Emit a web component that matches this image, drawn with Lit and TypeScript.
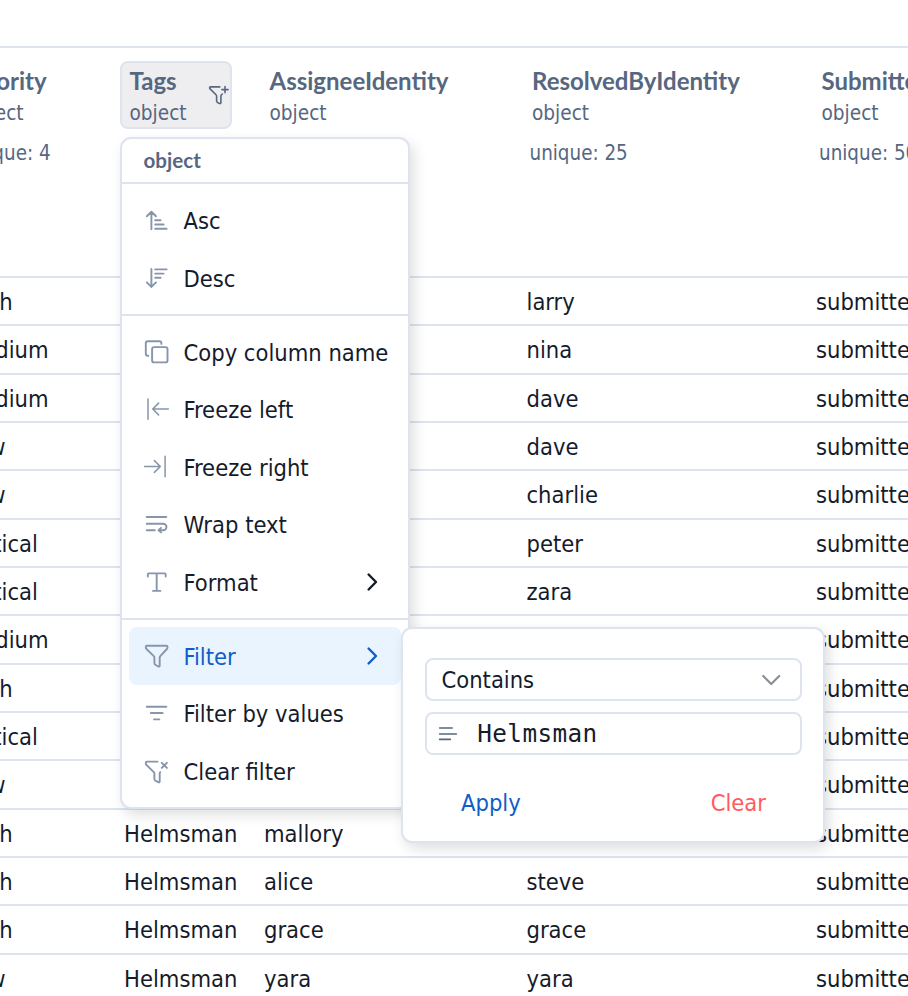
import { LitElement, html, svg, css } from "lit";
import { customElement } from "lit/decorators.js";
import { classMap } from "lit/directives/class-map.js";

const columns = [
  { name: "Priority", unique: "4" },
  { name: "Tags", unique: "" },
  { name: "AssigneeIdentity", unique: "" },
  { name: "ResolvedByIdentity", unique: "25" },
  { name: "SubmittedBy", unique: "50" },
];

const rows = [
  ["High", "", "", "larry"],
  ["Medium", "", "", "nina"],
  ["Medium", "", "", "dave"],
  ["Low", "", "", "dave"],
  ["Low", "", "", "charlie"],
  ["Critical", "", "", "peter"],
  ["Critical", "", "", "zara"],
  ["Medium", "", "", ""],
  ["High", "", "", ""],
  ["Critical", "", "", ""],
  ["Low", "", "", ""],
  ["High", "Helmsman", "mallory", ""],
  ["High", "Helmsman", "alice", "steve"],
  ["High", "Helmsman", "grace", "grace"],
  ["Low", "Helmsman", "yara", "yara"],
];

const icons: Record<string, unknown> = {
  asc: svg`<path d="M9.4 24.2V6.8M4.8 11.2L9.4 6.7L14 11.2M13.2 15.3H18.6M13.2 19.5H21.6M13.2 23.8H24.6"/>`,
  desc: svg`<path d="M9.4 6V24M4.8 19.4L9.4 23.9L14 19.4M13.2 6.4H24.6M13.2 10.6H21.6M13.2 14.8H18.6"/>`,
  copy: svg`<path d="M6.3 18.8H5.8A2 2 0 0 1 3.8 16.8V6.2A2 2 0 0 1 5.8 4.2H17.4A2 2 0 0 1 19.4 6.2V6.9"/><rect x="10.1" y="10.1" width="15.4" height="15.3" rx="2"/>`,
  left: svg`<path class="thin" d="M6 4.9V25.2M26.3 15H10.8M16.6 9.1L10.7 15L16.6 20.9"/>`,
  right: svg`<path class="thin" d="M23.1 4.3V24.7M2.6 14.5H18.2M12.4 8.6L18.3 14.5L12.4 20.4"/>`,
  wrap: svg`<path d="M4.7 8H24.3M4.7 14.7H21.2A3.25 3.25 0 0 1 21.2 21.2H16.6M19 18.9L16.5 21.2L19 23.4M4.7 21.2H12.8"/>`,
  format: svg`<path d="M5.8 9.5V7.4Q5.8 6.4 6.8 6.4H22.7Q23.7 6.4 23.7 7.4V9.5M14.7 6.4V23.9M11 23.9H18.4"/>`,
  filter: svg`<path d="M4.8 4.7H24.5Q25.5 4.7 25.5 5.7V6.6Q25.5 7.4 24.9 8L18.3 15.1Q17.7 15.8 17.7 16.6V24.6Q17.7 25.9 16.4 25.5L13.3 23.7Q12.4 23.1 12.4 22V16.6Q12.4 15.8 11.8 15.1L4.5 8Q3.8 7.4 3.8 6.6V5.7Q3.8 4.7 4.8 4.7Z"/>`,
  values: svg`<path d="M4.8 8.7H24.3M8.8 15H20.6M12 21.4H17.3"/>`,
  clear: svg`<path d="M15.6 5.6H4.8Q3.8 5.6 3.8 6.6V7.4Q3.8 8.2 4.4 8.8L11.8 16.2Q12.4 16.8 12.4 17.6V23Q12.4 24 13.2 24.5L16.2 26.2Q17.7 26.8 17.7 25.4V17.6Q17.7 16.8 18.3 16.2M19.8 6.8L24.9 11.9M24.9 6.8L19.8 11.9"/>`,
};

const sections = [
  [["asc", "Asc"], ["desc", "Desc"]],
  [["copy", "Copy column name"], ["left", "Freeze left"], ["right", "Freeze right"], ["wrap", "Wrap text"], ["format", "Format"]],
  [["filter", "Filter"], ["values", "Filter by values"], ["clear", "Clear filter"]],
];

@customElement("data-grid")
class DataGrid extends LitElement {
  static styles = css`
    :host { display: block; overflow: hidden; }
    .line {
      display: grid;
      grid-template-columns: 163px 140px 262.5px 289.5px 220px;
      margin-left: -49px;
      box-sizing: border-box;
      border-top: 2px solid #dde3ef;
      white-space: nowrap;
    }
    .head { height: 230px; padding-top: 13px; align-items: start; color: #56677f; }
    .cell { padding-left: 6px; }
    .chip {
      display: flex;
      align-items: center;
      justify-content: space-between;
      box-sizing: border-box;
      height: 68px;
      border: 2px solid transparent;
      border-radius: 8px;
      padding: 0 0 0 7.5px;
    }
    .chip.on { width: 112px; background: #eeeef1; border-color: #dde3ef; }
    .label { padding-top: 3px; }
    .name { font: 700 24px/33px Lato, sans-serif; }
    .type { font-size: 20.6px; line-height: 32px; }
    .unique { font-size: 20.4px; line-height: 30px; margin: 8.5px 0 0 7px; }
    .funnel { width: 24px; height: 24px; flex: none; }
    .row { height: 48.34px; line-height: 47px; font-size: 23.5px; color: #151b2b; }
    .row .cell { padding-left: 10px; padding-top: 1px; }
    .row .cell:first-child { padding-left: 13px; }
  `;

  render() {
    return html`
      <div class="line head">
        ${columns.map(
          (c) => html`<div class="cell">
            <div class=${classMap({ chip: true, on: c.name === "Tags" })}>
              <div class="label">
                <div class="name">${c.name}</div>
                <div class="type">object</div>
              </div>
              ${c.name === "Tags"
                ? html`<svg class="funnel" viewBox="0 0 24 24" fill="none" stroke="#56677f" stroke-width="1.6" stroke-linecap="round" stroke-linejoin="round">
                    <path d="M13.8 3.9H4.4Q3.6 3.9 3.6 4.7Q3.6 5.4 4.1 5.9L10 11.8Q10.6 12.4 10.6 13.2V18Q10.6 18.8 11.2 19.2L13.2 20.4Q14.9 21 14.9 19.4V13.2Q14.9 12.4 15.5 11.8L16.3 11M19 3.5V9.7M15.9 6.6H22.1" />
                  </svg>`
                : ""}
            </div>
            ${c.unique ? html`<div class="unique">unique: ${c.unique}</div>` : ""}
          </div>`
        )}
      </div>
      ${rows.map(
        (r) => html`<div class="line row">
          ${[...r, "submitted"].map((v) => html`<div class="cell">${v}</div>`)}
        </div>`
      )}
    `;
  }
}

@customElement("column-menu")
class ColumnMenu extends LitElement {
  static styles = css`
    :host {
      display: block;
      box-sizing: border-box;
      border: 2px solid #dde3ef;
      border-radius: 11px;
      background: #fff;
      box-shadow: 4px 6px 14px rgba(0, 0, 0, 0.13);
      color: #151b2b;
      white-space: nowrap;
    }
    .title { height: 43px; padding-left: 21.5px; font: 700 20.6px/42px Lato, sans-serif; color: #56677f; }
    .section { border-top: 2px solid #dde3ef; padding: 7.2px 7px; }
    .item { display: flex; align-items: center; height: 57.6px; padding: 0 20px 0 13px; border-radius: 8px; font-size: 23.5px; }
    .item.on { background: #e9f4ff; color: #0f5dc8; }
    .icon { width: 30px; height: 30px; margin-right: 11.5px; stroke: #8795aa; stroke-width: 1.9; }
    .thin { stroke-width: 1.5; }
    .label { flex: 1; padding-top: 2px; }
    .arrow { width: 16px; height: 20px; stroke: currentColor; stroke-width: 2.4; }
    svg { fill: none; stroke-linecap: round; stroke-linejoin: round; flex: none; }
  `;

  render() {
    return html`
      <div class="title">object</div>
      ${sections.map(
        (s) => html`<div class="section">
          ${s.map(
            ([icon, label]) => html`<div class=${classMap({ item: true, on: label === "Filter" })}>
              <svg class="icon" viewBox="0 0 30 30">${icons[icon]}</svg>
              <span class="label">${label}</span>
              ${label === "Filter" || label === "Format"
                ? html`<svg class="arrow" viewBox="0 0 16 20"><path d="M3.6 2.5L11 10L3.6 17.5" /></svg>`
                : ""}
            </div>`
          )}
        </div>`
      )}
    `;
  }
}

@customElement("filter-panel")
class FilterPanel extends LitElement {
  static styles = css`
    :host {
      display: flex;
      flex-direction: column;
      box-sizing: border-box;
      border: 2px solid #dde3ef;
      border-radius: 11px;
      padding: 29px 21px 0 22px;
      gap: 11px;
      background: #fff;
      box-shadow: 4px 6px 14px rgba(0, 0, 0, 0.13);
      font-size: 23.5px;
      color: #151b2b;
    }
    .field { display: flex; align-items: center; box-sizing: border-box; height: 43px; border: 2px solid #dde3ef; border-radius: 8px; }
    .select { justify-content: space-between; padding: 0 18px 0 14.5px; }
    .input { padding-left: 10px; gap: 18.3px; font: 24.3px "DejaVu Sans Mono", monospace; letter-spacing: 0.4px; }
    .actions { display: flex; justify-content: space-between; padding: 20px 36px 0; line-height: 34px; }
    .apply { color: #0f5dc8; }
    .clear { color: #ff5c5c; }
    svg { width: 22px; height: 22px; fill: none; stroke-linecap: round; stroke-linejoin: round; }
  `;

  render() {
    return html`
      <div class="field select">
        <span>Contains</span>
        <svg viewBox="0 0 22 22" stroke="#8b8f99" stroke-width="2.2"><path d="M3.2 7L11.2 15L19.2 7" /></svg>
      </div>
      <div class="field input">
        <svg viewBox="0 0 22 22" stroke="#56677f" stroke-width="1.6"><path d="M2.6 5H15.2M2.6 11H19.4M2.6 16.4H13.4" /></svg>
        <span>Helmsman</span>
      </div>
      <div class="actions"><span class="apply">Apply</span><span class="clear">Clear</span></div>
    `;
  }
}

@customElement("app-root")
class AppRoot extends LitElement {
  static styles = css`
    :host {
      display: block;
      position: relative;
      box-sizing: border-box;
      height: 996px;
      padding-top: 46px;
      overflow: hidden;
      background: #fff;
      font-family: "DejaVu Sans Condensed", "Noto Sans", sans-serif;
    }
    column-menu { position: absolute; left: 120px; top: 137px; width: 290px; height: 672px; }
    filter-panel { position: absolute; left: 401px; top: 627px; width: 424px; height: 216px; }
  `;

  render() {
    return html`<data-grid></data-grid><column-menu></column-menu><filter-panel></filter-panel>`;
  }
}
